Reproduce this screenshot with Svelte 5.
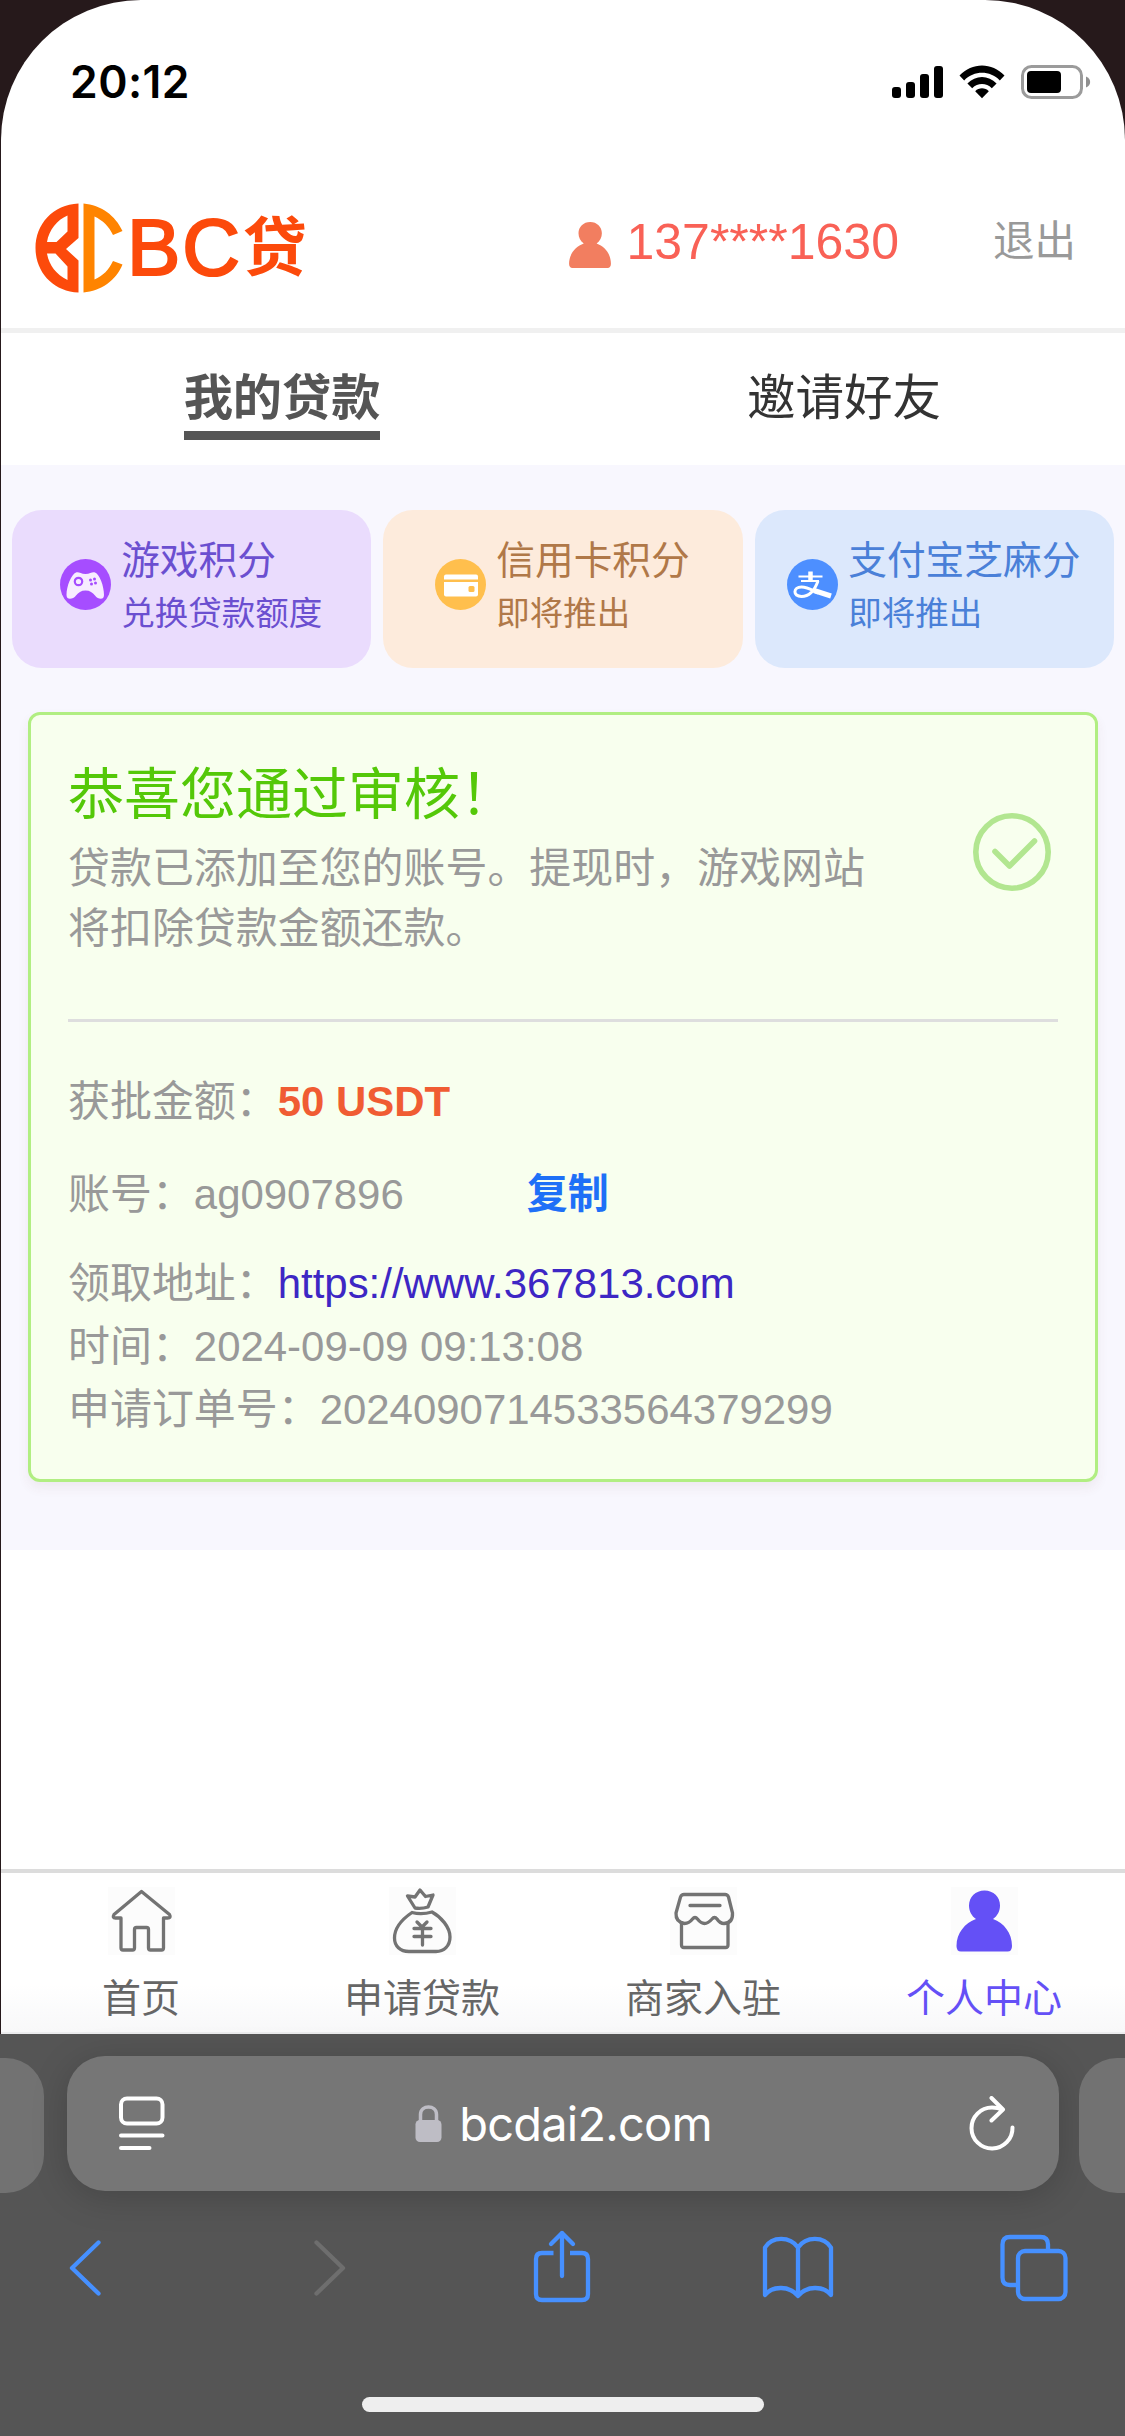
<script>
    let active = 'loans'

    const tabs = [
        { id: 'loans', label: '我的贷款' },
        { id: 'invite', label: '邀请好友' }
    ]

    const scores = [
        { icon: 'game', title: '游戏积分', note: '兑换贷款额度' },
        { icon: 'card', title: '信用卡积分', note: '即将推出' },
        { icon: 'pay', title: '支付宝芝麻分', note: '即将推出' }
    ]

    const nav = [
        { icon: 'home', label: '首页' },
        { icon: 'bag', label: '申请贷款' },
        { icon: 'shop', label: '商家入驻' },
        { icon: 'user', label: '个人中心' }
    ]

    const loan = {
        amount: '50 USDT',
        account: 'ag0907896',
        url: 'https://www.367813.com',
        time: '2024-09-09 09:13:08',
        order: '2024090714533564379299'
    }

    // shared by the header and the bottom navigation
    const userPath = 'M33.500 3.500C42.500 3.500 49 10 49 18.500C49 24 46.500 29 42 32C53 36 61 46 61 59Q61 64.500 56.500 64.500H10Q5.500 64.500 5.500 59C5.500 46 14 36 25 32C20.500 29 18 24 18 18.500C18 10 24.500 3.500 33.500 3.500Z'

    function copyAccount() {
        navigator.clipboard?.writeText(loan.account)
    }
</script>

<div class="phone">
    <div class="screen">
        <div class="status">
            <span class="status__time">20:12</span>
            <svg class="status__signal" width="51" height="34" viewBox="0 0 51 34">
                <rect x="0" y="22" width="9" height="11" rx="3"/>
                <rect x="14" y="17" width="9" height="16" rx="3"/>
                <rect x="28" y="9" width="9" height="24" rx="3"/>
                <rect x="42" y="1" width="9" height="32" rx="3"/>
            </svg>
            <svg class="status__wifi" width="46" height="34" viewBox="0 0 46 34">
                <path d="M0.5 10.6C13-3 33-3 45.5 10.6L40.8 15.4C31 5.2 15 5.2 5.2 15.4Z"/>
                <path d="M8.4 18.5C16.5 9.8 29.5 9.8 37.6 18.5L32.8 23.2C27.3 17.6 18.7 17.6 13.2 23.2Z"/>
                <path d="M16.2 26.2C20 22.4 26 22.4 29.8 26.2L23 33.2Z"/>
            </svg>
            <svg class="status__battery" width="70" height="34" viewBox="0 0 70 34">
                <rect x="1.5" y="1.5" width="59" height="31" rx="9" fill="none" stroke="#9b9b9b" stroke-width="3"/>
                <rect x="6" y="6" width="34" height="22" rx="4"/>
                <path d="M65 11.5C70.5 13.5 70.5 20.500 65 22.500Z" fill="#8f8f8f"/>
            </svg>
        </div>

        <header class="header">
            <a class="logo" href="/">
                <svg width="88" height="90" viewBox="0 0 88 90">
                    <path fill="#fc4a0b" fill-rule="evenodd" d="M43.500 0.500V35L31 46L43.500 57.500V89.500C18 88.500 0.500 69 0.500 45C0.500 21 18 1.500 43.500 0.500ZM32.500 12.500C22 17 14 27 12 39H21.500L32.500 28.500ZM12 50.500C14 62 21 71.500 32.500 77V63.500L20.500 50.500Z"/>
                    <path fill="#ff8400" fill-rule="evenodd" d="M48.500 0.500C66 2 80.500 12.500 87.500 28L78 32C74 23.500 68 17.500 59.500 13.500V76.500C68 73 74 66.500 78 58L87.500 61.500C81 77.500 66 88 48.500 89.500Z"/>
                </svg>
                <span class="logo__bc">BC</span><span class="logo__dai">贷</span>
            </a>
            <svg class="header__user" width="42" height="46" viewBox="5.500 3.500 55.500 61">
                <path d={userPath}/>
            </svg>
            <span class="header__phone">137****1630</span>
            <a class="header__exit" href="/logout">退出</a>
        </header>

        <div class="tabs">
            {#each tabs as tab}
                <div class="tabs__cell">
                    <button class="tabs__btn" class:tabs__btn_active={active === tab.id} on:click={() => active = tab.id}>{tab.label}</button>
                </div>
            {/each}
        </div>

        <main class="main">
            <div class="scores">
                {#each scores as score}
                    <div class="score score_{score.icon}">
                        <svg class="score__icon" width="51" height="51" viewBox="0 0 51 51">
                            {#if score.icon === 'game'}
                                <circle cx="25.500" cy="25.500" r="25.500" fill="#a64dff"/>
                                <path fill="#f7edff" d="M16 13.500C19 12.500 20.500 15 25.500 15C30.500 15 32 12.500 35 13.500C39.500 15 44 27 44 36C44 41.500 38 40.500 35 36.500C32.500 33.500 30 31.500 25.500 31.500C21 31.500 18.500 33.500 16 36.500C13 40.500 6.500 41.500 6.500 36C6.500 27 11.500 15 16 13.500Z"/>
                                <circle cx="18.500" cy="22.500" r="3.700" fill="#f7edff" stroke="#a64dff" stroke-width="2.200"/>
                                <g fill="#a64dff">
                                    <circle cx="30.500" cy="21" r="1.500"/>
                                    <circle cx="34.500" cy="20" r="1.500"/>
                                    <circle cx="31.500" cy="25" r="1.500"/>
                                    <circle cx="35.500" cy="24" r="1.500"/>
                                </g>
                            {:else if score.icon === 'card'}
                                <circle cx="25.500" cy="25.500" r="25.500" fill="#ffbf4d"/>
                                <path fill="#fff" d="M11 15.500H41Q43 15.500 43 17.500V20.500H9V17.500Q9 15.500 11 15.500Z"/>
                                <path fill="#fff" d="M9 23H43V35.500Q43 37.500 41 37.500H11Q9 37.500 9 35.500Z"/>
                                <rect x="33.500" y="27" width="6" height="6" rx="1.500" fill="#ffbf4d"/>
                            {:else}
                                <circle cx="25.500" cy="25.500" r="25.500" fill="#4d8fff"/>
                                <g fill="none" stroke="#fff">
                                    <path stroke-width="4.500" d="M23.500 12.500V21"/>
                                    <path stroke-width="1.800" d="M11.500 17.500H35.500M14 22H32"/>
                                    <path stroke-width="3" d="M31 22C28.500 29 24 37.500 14.500 37.500C5.500 37.500 6 28 14.500 28C21.500 28 26 32 31 34"/>
                                    <path stroke-width="5" d="M27 31.500L44 37"/>
                                </g>
                            {/if}
                        </svg>
                        <div class="score__text">
                            <div class="score__title">{score.title}</div>
                            <div class="score__note">{score.note}</div>
                        </div>
                    </div>
                {/each}
            </div>

            <section class="loan">
                <div class="loan__top">
                    <div class="loan__info">
                        <h2 class="loan__title">恭喜您通过审核！</h2>
                        <p class="loan__desc">贷款已添加至您的账号。提现时，游戏网站将扣除贷款金额还款。</p>
                    </div>
                    <svg class="loan__check" width="78" height="78" viewBox="0 0 78 78">
                        <circle cx="39" cy="39" r="36.200"/>
                        <path d="M22 38.500L36.500 53L61.500 28"/>
                    </svg>
                </div>
                <div class="loan__row loan__row_amount">获批金额：<b class="loan__amount">{loan.amount}</b></div>
                <div class="loan__row loan__row_account">账号：<span class="loan__account">{loan.account}</span><button class="loan__copy" on:click={copyAccount}>复制</button></div>
                <div class="loan__row">领取地址：<a class="loan__link" href={loan.url}>{loan.url}</a></div>
                <div class="loan__row">时间：{loan.time}</div>
                <div class="loan__row">申请订单号：{loan.order}</div>
            </section>
        </main>

        <nav class="nav">
            {#each nav as item}
                <a class="nav__item" class:nav__item_active={item.icon === 'user'} href="/{item.icon}">
                    <svg class="nav__icon" width="67" height="68" viewBox="0 0 67 68">
                        {#if item.icon === 'home'}
                            <path d="M33.500 4.500L61.500 27.500Q63.500 31 59.500 31H55.500V61Q55.500 63 53.500 63H42.500Q40.500 63 40.500 61V42.500Q40.500 40.500 38.500 40.500H28.500Q26.500 40.500 26.500 42.500V61Q26.500 63 24.500 63H15Q13 63 13 61V31H7.500Q4 31 6 27.500Z"/>
                        {:else if item.icon === 'bag'}
                            <path d="M26 21L18.500 9L26 10L31 3L36.500 9.500L44 8L39 20Q32.500 22 26 21Z"/>
                            <path d="M23 25.500Q32.500 28 43 25C52 30 61 40 61 50C61 59 55 64.500 47 64.500H20C11 64.500 5.500 59 5.500 51C5.500 41 12 33 23 25.500Z"/>
                            <path d="M28 35L33 40L38 35M25 41.500H42M25 49.500H42M33.500 41V58"/>
                        {:else if item.icon === 'shop'}
                            <path d="M14 7.500H55Q57.500 7.500 58.500 10L62.500 26Q63 36 54 36.500Q50 36.500 47 32Q44.500 29 42 32Q38 36.500 34.500 36.500Q31 36.500 27.500 32Q25 29 22.500 32Q19 36.500 14.500 36.500Q5.500 35 6 26L10.500 10Q11.500 7.500 14 7.500Z"/>
                            <path d="M11.500 36V58Q11.500 60.500 14 60.500H55.500Q58 60.500 58 58V36M20 18.500H50"/>
                        {:else}
                            <path class="nav__fill" d={userPath}/>
                        {/if}
                    </svg>
                    <span class="nav__label">{item.label}</span>
                </a>
            {/each}
        </nav>
    </div>

    <div class="browser">
        <div class="browser__bars">
            <div class="browser__side browser__side_left"></div>
            <div class="browser__bar">
                <svg width="46" height="56" viewBox="0 0 46 56" fill="none" stroke="#fff" stroke-width="4" stroke-linecap="round">
                    <rect x="2" y="2.500" width="41.500" height="25" rx="6"/>
                    <path d="M2 39.500H43.500M2 52H30.500"/>
                </svg>
                <div class="browser__address">
                    <svg width="27" height="38" viewBox="0 0 27 38">
                        <rect x="0.500" y="15" width="26" height="22" rx="4.500" fill="#bebdc5"/>
                        <path d="M5.500 17V9.500C5.500-0.500 21.500-0.500 21.500 9.500V17" fill="none" stroke="#bebdc5" stroke-width="3.500"/>
                    </svg>
                    <span class="browser__url">bcdai2.com</span>
                </div>
                <svg width="46" height="56" viewBox="0 0 46 56" fill="none" stroke="#fff" stroke-width="4" stroke-linecap="round" stroke-linejoin="round">
                    <path d="M43.500 31.500A20.500 20.500 0 1 1 23 11.500Q29 11.500 33 13.500"/>
                    <path d="M22.500 2L34 13.500L22.500 24.500"/>
                </svg>
            </div>
            <div class="browser__side browser__side_right"></div>
        </div>

        <div class="tools">
            <svg class="tools__back" width="34" height="72" viewBox="0 0 34 72">
                <path d="M31.500 10.500L5 36L31.500 61.500"/>
            </svg>
            <svg class="tools__forward" width="34" height="72" viewBox="0 0 34 72">
                <path d="M4.500 10.500L31 36L4.500 61.500"/>
            </svg>
            <svg class="tools__share" width="60" height="78" viewBox="0 0 60 78">
                <path d="M21.500 24H10Q4 24 4 30V65Q4 71 10 71H50Q56 71 56 65V30Q56 24 50 24H38" stroke-linecap="butt"/>
                <path d="M30 47V4M19 15L30 4L41 15"/>
            </svg>
            <svg class="tools__books" width="74" height="72" viewBox="0 0 74 72">
                <path d="M4 15.500C11 4 29 4 37 15.500C45 4 63 4 70 15.500V63C63 53.500 45 53.500 37 64C29 53.500 11 53.500 4 63ZM37 15.500V63"/>
            </svg>
            <svg class="tools__pages" width="72" height="72" viewBox="0 0 72 72">
                <path d="M20 53H13Q5.500 53 5.500 45.500V12.500Q5.500 5 13 5H43.500Q51 5 51 12.500V18" stroke-linecap="butt"/>
                <rect x="21" y="19" width="47.500" height="48" rx="7"/>
            </svg>
        </div>

        <div class="indicator"></div>
    </div>
</div>

<style>
    :global(body) {
        margin: 0;
        background: #26191b;
    }
    .phone {
        width: 1125px;
        height: 2436px;
        overflow: hidden;
        display: flex;
        flex-direction: column;
        background: #26191b;
        font-family: "Liberation Sans", "Noto Sans CJK SC", sans-serif;
    }
    .phone a {
        text-decoration: none;
    }
    .phone button {
        padding: 0;
        border: none;
        background: transparent;
        font-family: inherit;
        cursor: pointer;
    }
    .screen {
        display: flex;
        flex-direction: column;
        height: 2034px;
        margin-left: 1px;
        border-radius: 140px 140px 0 0;
        overflow: hidden;
        background: #fff;
    }

    /* STATUS */
    .status {
        display: flex;
        align-items: center;
        box-sizing: border-box;
        height: 164px;
        padding: 0 34px 0 69px;
    }
    .status__time {
        flex: 1;
        font-family: Inter, sans-serif;
        font-size: 44.500px;
        font-weight: 600;
        line-height: 50px;
        letter-spacing: 0.4px;
    }
    .status__signal {
        margin-right: 16px;
    }
    .status__wifi {
        margin-right: 16px;
    }

    /* HEADER */
    .header {
        display: flex;
        align-items: center;
        box-sizing: border-box;
        height: 169px;
        padding: 0 49px 0 34px;
        border-bottom: 5px solid #f0f0f0;
    }
    .logo {
        flex: 1;
        display: flex;
        align-items: center;
        padding-top: 3px;
        color: #fc4a0b;
    }
    .logo__bc {
        margin-left: 4px;
        font-size: 80px;
        line-height: 90px;
        letter-spacing: 1.800px;
        -webkit-text-stroke: 2.200px #fc4a0b;
    }
    .logo__dai {
        margin-left: 1px;
        font-size: 64px;
        font-weight: 700;
        line-height: 90px;
    }
    .header__user {
        margin: -3px 15px 0 0;
        fill: #f27e60;
    }
    .header__phone {
        margin-top: -9px;
        font-size: 50px;
        line-height: 60px;
        color: #f96156;
    }
    .header__exit {
        margin: -8px 0 0 94px;
        font-size: 41.500px;
        line-height: 60px;
        color: #999;
    }

    /* TABS */
    .tabs {
        display: flex;
        height: 132px;
    }
    .tabs__cell {
        flex: 1;
        display: flex;
        justify-content: center;
        align-items: flex-start;
        padding-top: 31px;
    }
    .phone .tabs__btn {
        height: 76px;
        padding-bottom: 9px;
        font-size: 48.500px;
        line-height: 66px;
        color: #333;
    }
    .phone .tabs__btn_active {
        padding-bottom: 0;
        border-bottom: 9px solid #555;
        font-size: 49.200px;
        font-weight: 700;
        color: #555;
    }

    /* MAIN */
    .main {
        box-sizing: border-box;
        height: 1085px;
        padding-top: 45px;
        background: #f8f7fe;
    }
    .scores {
        display: flex;
        gap: 12px;
        padding: 0 11px;
    }
    .score {
        flex: 1 1 0;
        display: flex;
        align-items: center;
        justify-content: center;
        gap: 10px;
        height: 158px;
        padding-right: 1px;
        border-radius: 30px;
        white-space: nowrap;
    }
    .score_game {
        background: #eadcfd;
        color: #6b4fd0;
    }
    .score_card {
        background: #fdebdc;
        color: #b07848;
    }
    .score_pay {
        background: #dce8fc;
        color: #4a80d8;
    }
    .score__icon {
        margin-top: -9px;
    }
    .score__text {
        margin-top: -5px;
    }
    .score__title {
        font-size: 38.700px;
        line-height: 54px;
    }
    .score__note {
        padding-top: 1px;
        font-size: 33.500px;
        line-height: 50px;
    }

    /* LOAN */
    .loan {
        box-sizing: border-box;
        height: 770px;
        margin: 44px 27px 0 27px;
        padding: 40px 37px 0 37px;
        border: 3px solid #b1ee82;
        border-radius: 12px;
        background: #f8ffee;
        box-shadow: 0 6px 12px rgba(120, 60, 60, 0.07);
        color: #999;
    }
    .loan__top {
        display: flex;
        align-items: flex-start;
        justify-content: space-between;
        box-sizing: border-box;
        height: 267px;
        padding: 0 7px 0 0;
        border-bottom: 3px solid #dedede;
    }
    .loan__info {
        width: 810px;
    }
    .loan__title {
        margin: 0;
        font-size: 56px;
        font-weight: 400;
        line-height: 80px;
        color: #54c808;
    }
    .loan__desc {
        margin: 4px 0 0;
        font-size: 41.950px;
        line-height: 60px;
    }
    .loan__check {
        fill: none;
        stroke: #b2e690;
        stroke-width: 5.600;
        stroke-linecap: round;
        stroke-linejoin: round;
        margin-top: 58px;
    }
    .loan__row {
        display: flex;
        align-items: center;
        height: 63px;
        font-size: 41.950px;
        line-height: 63px;
        white-space: nowrap;
    }
    .loan__row_amount {
        margin-top: 48px;
        height: 62px;
    }
    .loan__row_account {
        margin: 31px 0 26px;
    }
    .loan__amount {
        color: #f05c33;
    }
    .loan__account {
        width: 333px;
    }
    .phone .loan__copy {
        font-size: 41px;
        font-weight: 700;
        line-height: 63px;
        color: #1e70f7;
    }
    .loan__link {
        color: #3d27c4;
    }

    /* NAV */
    .nav {
        display: flex;
        box-sizing: border-box;
        height: 165px;
        margin-top: auto;
        border-top: 4px solid #dcdcdc;
        border-bottom: 2px solid #ececee;
        background: linear-gradient(#fff 70%, #f8f8f9);
    }
    .nav__item {
        flex: 1;
        display: flex;
        flex-direction: column;
        align-items: center;
        padding-top: 14px;
        color: #666;
    }
    .nav__item_active {
        color: #6450f6;
    }
    .nav__icon {
        margin-right: 1px;
        background: #fcfcfc;
        fill: none;
        stroke: #737373;
        stroke-width: 3.300;
        stroke-linecap: round;
        stroke-linejoin: round;
    }
    .nav__fill {
        fill: #6450f6;
        stroke: none;
    }
    .nav__label {
        margin: 16px 1px 0 0;
        font-size: 39px;
        line-height: 56px;
    }

    /* BROWSER */
    .browser {
        display: flex;
        flex-direction: column;
        align-items: center;
        height: 402px;
        background: #555;
    }
    .browser__bars {
        display: flex;
        width: 1125px;
        padding-top: 22px;
        overflow: visible;
    }
    .browser__bar {
        display: flex;
        align-items: center;
        justify-content: space-between;
        box-sizing: border-box;
        width: 992px;
        height: 135px;
        margin: 0 20px 0 23px;
        padding: 0 44px 0 52px;
        border-radius: 38px;
        background: #767676;
        box-shadow: 0 6px 36px rgba(0, 0, 0, 0.18);
    }
    .browser__side {
        height: 135px;
        margin-top: 2px;
        background: #727272;
    }
    .browser__side_left {
        width: 44px;
        border-radius: 0 38px 38px 0;
    }
    .browser__side_right {
        width: 46px;
        border-radius: 38px 0 0 38px;
    }
    .browser__address {
        display: flex;
        align-items: center;
        gap: 17px;
        margin-right: 7px;
    }
    .browser__url {
        font-family: Inter, sans-serif;
        font-size: 47px;
        line-height: 60px;
        letter-spacing: -0.8px;
        color: #fff;
    }
    .tools {
        display: flex;
        align-items: center;
        box-sizing: border-box;
        width: 1125px;
        height: 80px;
        margin-top: 35px;
        padding-left: 67px;
        fill: none;
        stroke: #4690ff;
        stroke-width: 4.300;
        stroke-linecap: round;
        stroke-linejoin: round;
    }
    .tools__forward {
        margin-left: 211px;
        stroke: #6e6e6e;
    }
    .tools__share {
        margin-left: 186px;
    }
    .tools__books {
        margin-left: 169px;
    }
    .tools__pages {
        margin-left: 162px;
    }
    .indicator {
        width: 402px;
        height: 15px;
        margin-top: 89px;
        border-radius: 8px;
        background: #eee;
    }
</style>
